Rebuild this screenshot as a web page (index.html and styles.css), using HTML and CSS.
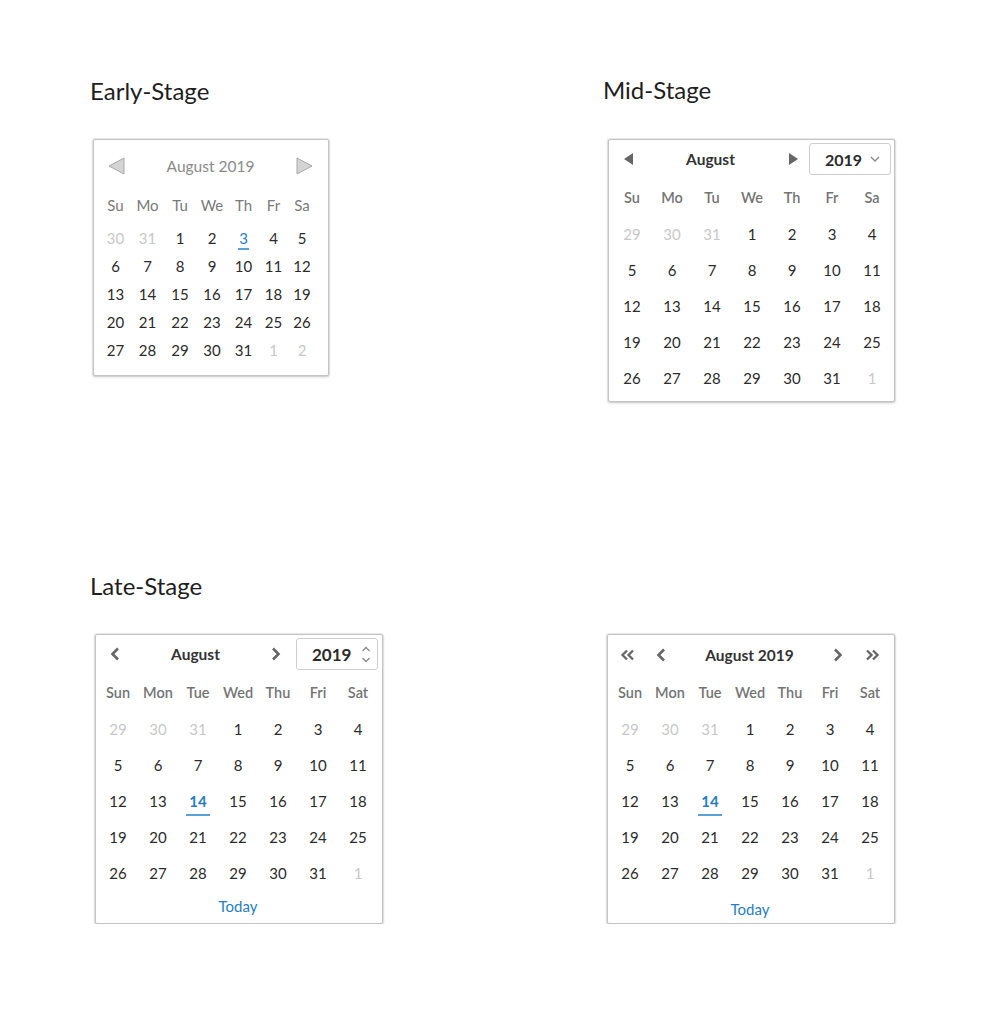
FILE: index.html
```html
<!DOCTYPE html>
<html lang="en">
<head>
<meta charset="utf-8">
<title>Datepicker stages</title>
<link rel="stylesheet" href="styles.css">
</head>
<body>
<div class="page">
  <h2 class="title">Early-Stage</h2>
  <h2 class="title title-mid">Mid-Stage</h2>

  <!-- Early stage -->
  <div class="cal cal-early">
    <div class="head">
      <svg class="tri" width="17" height="18" viewBox="0 0 17 18"><path d="M16 1 L1 9 L16 17 Z" fill="#d4d4d4" stroke="#a9a9a9" stroke-width="1"/></svg>
      <span class="head-title">August 2019</span>
      <svg class="tri" width="17" height="18" viewBox="0 0 17 18"><path d="M1 1 L16 9 L1 17 Z" fill="#d4d4d4" stroke="#a9a9a9" stroke-width="1"/></svg>
    </div>
    <div class="grid wk">
      <span>Su</span><span>Mo</span><span>Tu</span><span>We</span><span>Th</span><span>Fr</span><span>Sa</span>
    </div>
    <div class="grid days">
      <span class="muted">30</span><span class="muted">31</span><span>1</span><span>2</span><span><b class="today">3</b></span><span>4</span><span>5</span>
      <span>6</span><span>7</span><span>8</span><span>9</span><span>10</span><span>11</span><span>12</span>
      <span>13</span><span>14</span><span>15</span><span>16</span><span>17</span><span>18</span><span>19</span>
      <span>20</span><span>21</span><span>22</span><span>23</span><span>24</span><span>25</span><span>26</span>
      <span>27</span><span>28</span><span>29</span><span>30</span><span>31</span><span class="muted">1</span><span class="muted">2</span>
    </div>
  </div>

  <!-- Mid stage -->
  <div class="cal cal-mid">
    <div class="head">
      <span class="nav"><svg width="9" height="12" viewBox="0 0 9 12"><path d="M9 0 L0 6 L9 12 Z" fill="#666"/></svg></span>
      <span class="head-title">August</span>
      <span class="nav"><svg width="9" height="12" viewBox="0 0 9 12"><path d="M0 0 L9 6 L0 12 Z" fill="#666"/></svg></span>
      <span class="year year-select">2019<svg class="caret" width="10" height="6" viewBox="0 0 10 6"><path d="M1 1 L5 5 L9 1" fill="none" stroke="#8a8a8a" stroke-width="1.4"/></svg></span>
    </div>
    <div class="grid wk">
      <span>Su</span><span>Mo</span><span>Tu</span><span>We</span><span>Th</span><span>Fr</span><span>Sa</span>
    </div>
    <div class="grid days">
      <span class="muted">29</span><span class="muted">30</span><span class="muted">31</span><span>1</span><span>2</span><span>3</span><span>4</span>
      <span>5</span><span>6</span><span>7</span><span>8</span><span>9</span><span>10</span><span>11</span>
      <span>12</span><span>13</span><span>14</span><span>15</span><span>16</span><span>17</span><span>18</span>
      <span>19</span><span>20</span><span>21</span><span>22</span><span>23</span><span>24</span><span>25</span>
      <span>26</span><span>27</span><span>28</span><span>29</span><span>30</span><span>31</span><span class="muted">1</span>
    </div>
  </div>

  <h2 class="title title-late">Late-Stage</h2>
  <div class="spacer"></div>

  <!-- Late stage A -->
  <div class="cal cal-late">
    <div class="head">
      <span class="nav"><svg width="10" height="14" viewBox="0 0 10 14"><path d="M8 1.5 L2.5 7 L8 12.5" fill="none" stroke="#666" stroke-width="2.6"/></svg></span>
      <span class="head-title">August</span>
      <span class="nav"><svg width="10" height="14" viewBox="0 0 10 14"><path d="M2 1.5 L7.5 7 L2 12.5" fill="none" stroke="#666" stroke-width="2.6"/></svg></span>
      <span class="year year-input">2019<svg class="spin" width="10" height="17" viewBox="0 0 10 17"><path d="M1.5 5 L5 1.5 L8.5 5 M1.5 12 L5 15.5 L8.5 12" fill="none" stroke="#8a8a8a" stroke-width="1.3"/></svg></span>
    </div>
    <div class="grid wk">
      <span>Sun</span><span>Mon</span><span>Tue</span><span>Wed</span><span>Thu</span><span>Fri</span><span>Sat</span>
    </div>
    <div class="grid days">
      <span class="muted">29</span><span class="muted">30</span><span class="muted">31</span><span>1</span><span>2</span><span>3</span><span>4</span>
      <span>5</span><span>6</span><span>7</span><span>8</span><span>9</span><span>10</span><span>11</span>
      <span>12</span><span>13</span><span><b class="today today-bold">14</b></span><span>15</span><span>16</span><span>17</span><span>18</span>
      <span>19</span><span>20</span><span>21</span><span>22</span><span>23</span><span>24</span><span>25</span>
      <span>26</span><span>27</span><span>28</span><span>29</span><span>30</span><span>31</span><span class="muted">1</span>
    </div>
    <div class="foot">Today</div>
  </div>

  <!-- Late stage B -->
  <div class="cal cal-late2">
    <div class="head">
      <span class="nav"><svg width="15" height="12" viewBox="0 0 15 12"><path d="M7 1.5 L2.5 6 L7 10.5 M13 1.5 L8.5 6 L13 10.5" fill="none" stroke="#666" stroke-width="2.3"/></svg></span>
      <span class="nav"><svg width="10" height="14" viewBox="0 0 10 14"><path d="M8 1.5 L2.5 7 L8 12.5" fill="none" stroke="#666" stroke-width="2.6"/></svg></span>
      <span class="head-title">August 2019</span>
      <span class="nav"><svg width="10" height="14" viewBox="0 0 10 14"><path d="M2 1.5 L7.5 7 L2 12.5" fill="none" stroke="#666" stroke-width="2.6"/></svg></span>
      <span class="nav"><svg width="15" height="12" viewBox="0 0 15 12"><path d="M2 1.5 L6.5 6 L2 10.5 M8 1.5 L12.5 6 L8 10.5" fill="none" stroke="#666" stroke-width="2.3"/></svg></span>
    </div>
    <div class="grid wk">
      <span>Sun</span><span>Mon</span><span>Tue</span><span>Wed</span><span>Thu</span><span>Fri</span><span>Sat</span>
    </div>
    <div class="grid days">
      <span class="muted">29</span><span class="muted">30</span><span class="muted">31</span><span>1</span><span>2</span><span>3</span><span>4</span>
      <span>5</span><span>6</span><span>7</span><span>8</span><span>9</span><span>10</span><span>11</span>
      <span>12</span><span>13</span><span><b class="today today-bold">14</b></span><span>15</span><span>16</span><span>17</span><span>18</span>
      <span>19</span><span>20</span><span>21</span><span>22</span><span>23</span><span>24</span><span>25</span>
      <span>26</span><span>27</span><span>28</span><span>29</span><span>30</span><span>31</span><span class="muted">1</span>
    </div>
    <div class="foot">Today</div>
  </div>
</div>
</body>
</html>
```

FILE: styles.css
```css
* { box-sizing: border-box; }

body {
  margin: 0;
  background: #fff;
  color: #333;
  font-family: Lato, "Noto Sans", "Liberation Sans", sans-serif;
}

.page {
  display: grid;
  grid-template-columns: 513px 1fr;
  align-items: start;
  padding: 77px 0 0 90px;
}

.title {
  margin: 0;
  font-size: 24px;
  line-height: 28px;
  font-weight: 400;
  color: #1e1e1e;
}
.title-mid { margin-top: -1px; }
.title-late { margin-top: 170px; }

.cal {
  margin-top: 34px;
  background: #fff;
  border: 1px solid #c4c4c4;
  border-radius: 2px;
  box-shadow: 0 0 1px 1px rgba(0, 0, 0, 0.07), 0 1px 3px rgba(0, 0, 0, 0.18);
}

.head {
  display: flex;
  align-items: center;
}
.head-title {
  flex: 1;
  text-align: center;
}
.nav {
  display: flex;
  align-items: center;
  justify-content: center;
  width: 32px;
}
.nav svg, .tri { display: block; }

.grid {
  display: grid;
  grid-template-columns: repeat(7, 40px);
  text-align: center;
}
.wk span { display: block; }
.muted { color: #c8c8c8; }

.today {
  display: inline-block;
  position: relative;
  color: #2a7dc1;
  font-weight: 400;
}
.today::after {
  content: "";
  position: absolute;
  left: -1px;
  right: -1px;
  bottom: 1px;
  height: 2px;
  background: #5ba1d8;
}
.today-bold { font-weight: 700; }
.today-bold::after { left: -3px; right: -3px; bottom: 3px; }

/* Early stage */
.cal-early {
  width: 236px;
  margin-left: 3px;
  padding: 16px 0 11px 6px;
}
.cal-early .head {
  height: 20px;
  padding: 0 15px 0 8px;
}
.cal-early .head-title {
  font-size: 15.5px;
  color: #8a8a8a;
}
.cal-early .grid { grid-template-columns: 31px 33px 32px 32px 31px 29px 28px; }
.cal-early .wk {
  margin-top: 15px;
  margin-bottom: 5px;
  line-height: 28px;
  font-size: 15px;
  color: #7a7a7a;
}
.cal-early .days {
  line-height: 28px;
  font-size: 15px;
  color: #2b2b2b;
}
.cal-early .today::after { bottom: 2px; }

/* Mid stage */
.cal-mid {
  width: 287px;
  margin-left: 5px;
  padding: 3px 2px 5px 3px;
}
.cal-mid .head {
  height: 32px;
  margin-right: 1px;
}
.cal-mid .head-title {
  font-size: 15.5px;
  font-weight: 700;
  color: #333;
}

.year {
  display: flex;
  align-items: center;
  justify-content: space-between;
  width: 82px;
  height: 32px;
  border: 1px solid #cfcfcf;
  border-radius: 3px;
  font-size: 16px;
  color: #2b2b2b;
}
.year-select {
  padding: 0 10px 0 15px;
  font-weight: 700;
}
.year-input {
  padding: 0 6px 0 15px;
  font-size: 17px;
  font-weight: 700;
}

.cal-mid .wk,
.cal-late .wk,
.cal-late2 .wk {
  margin-top: 5px;
  line-height: 36px;
  font-size: 14.5px;
  font-weight: 600;
  color: #747474;
}
.cal-mid .days,
.cal-late .days,
.cal-late2 .days {
  line-height: 36px;
  font-size: 15px;
  color: #2b2b2b;
}

/* Late stage A */
.cal-late {
  width: 288px;
  margin-left: 5px;
  padding: 3px 4px 6px 2px;
}
.cal-late .head {
  height: 32px;
  padding-left: 1px;
}
.cal-late .nav:nth-child(3) { margin-right: 4px; }
.cal-late .head-title,
.cal-late2 .head-title {
  font-size: 15.5px;
  font-weight: 700;
  color: #333;
}

.foot {
  text-align: center;
  line-height: 22px;
  font-size: 15px;
  color: #2a7dc1;
}
.cal-late .foot { margin-top: 4px; }

/* Late stage B */
.cal-late2 {
  width: 288px;
  margin-left: 4px;
  padding: 4px 4px 3px 2px;
}
.cal-late2 .head {
  height: 32px;
  padding: 0 1px 0 0;
}
.cal-late2 .nav { width: 34px; }
.cal-late2 .wk { margin-top: 4px; }
.cal-late2 .foot { margin-top: 7px; }
```
